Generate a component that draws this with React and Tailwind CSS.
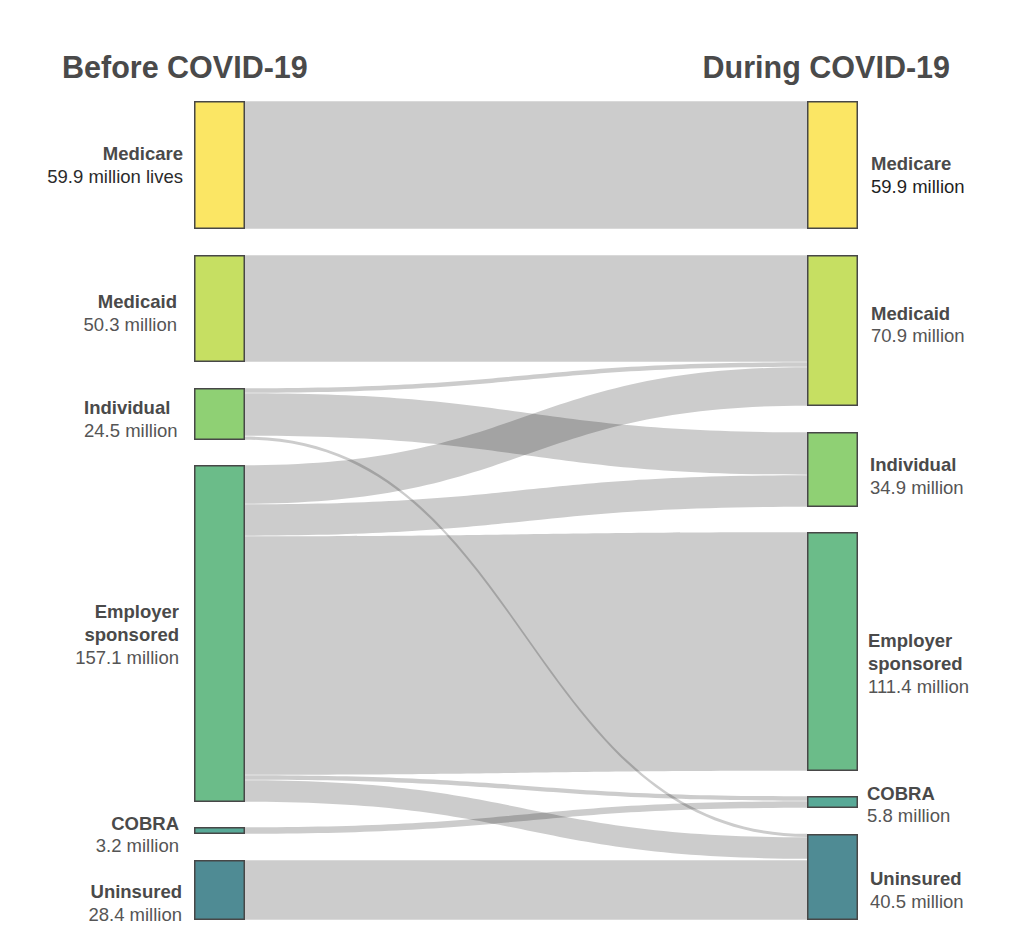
const L = 245
const R = 807

const links = [
  // [left top, left bottom, right top, right bottom]
  [101, 229, 101, 229],
  [255, 362, 255, 362],
  [388, 393, 362, 367],
  [465, 504, 367, 406],
  [393, 436, 432, 475],
  [504, 536, 475, 507],
  [536, 775, 532, 771],
  [775, 780, 796, 801],
  [827, 834, 801, 808],
  [436.3, 440, 833.5, 837.2],
  [780, 802, 837, 859],
  [860, 920, 860, 920],
]

const nodes = [
  { x: 194, y0: 101, y1: 229, fill: '#fbe664' },
  { x: 194, y0: 255, y1: 362, fill: '#c6df62' },
  { x: 194, y0: 388, y1: 440, fill: '#8fd074' },
  { x: 194, y0: 465, y1: 802, fill: '#6bbc89' },
  { x: 194, y0: 827, y1: 834, fill: '#58a997' },
  { x: 194, y0: 860, y1: 920, fill: '#4f8b94' },
  { x: 807, y0: 101, y1: 229, fill: '#fbe664' },
  { x: 807, y0: 255, y1: 406, fill: '#c6df62' },
  { x: 807, y0: 432, y1: 507, fill: '#8fd074' },
  { x: 807, y0: 532, y1: 771, fill: '#6bbc89' },
  { x: 807, y0: 796, y1: 808, fill: '#58a997' },
  { x: 807, y0: 834, y1: 920, fill: '#4f8b94' },
]

// label lines: [text, visual center y, bold?, colour]
const leftLabels = [
  { x: 183, anchor: 'end', lines: [['Medicare', 153, true], ['59.9 million lives', 176, false, '#2b2b2b']] },
  { x: 177, anchor: 'end', lines: [['Medicaid', 301, true], ['50.3 million', 324]] },
  { x: 84, anchor: 'start', lines: [['Individual', 407, true], ['24.5 million', 430]] },
  { x: 179, anchor: 'end', lines: [['Employer', 611, true], ['sponsored', 634, true], ['157.1 million', 657]] },
  { x: 179, anchor: 'end', lines: [['COBRA', 823, true], ['3.2 million', 845]] },
  { x: 182, anchor: 'end', lines: [['Uninsured', 891, true], ['28.4 million', 914]] },
]

const rightLabels = [
  { x: 871, lines: [['Medicare', 163, true], ['59.9 million', 186, false, '#1f1f1f']] },
  { x: 871, lines: [['Medicaid', 313, true], ['70.9 million', 335]] },
  { x: 870, lines: [['Individual', 464, true], ['34.9 million', 487]] },
  { x: 868, lines: [['Employer', 640, true], ['sponsored', 663, true], ['111.4 million', 686]] },
  { x: 867, lines: [['COBRA', 793, true], ['5.8 million', 815]] },
  { x: 870, lines: [['Uninsured', 878, true], ['40.5 million', 901]] },
]

function band([a0, b0, a1, b1]) {
  const m = (L + R) / 2
  const t0 = a0 + 0.3
  const t1 = a1 + 0.3
  const u0 = b0 - 0.3
  const u1 = b1 - 0.3
  return `M${L},${t0} C${m},${t0} ${m},${t1} ${R},${t1} L${R},${u1} C${m},${u1} ${m},${u0} ${L},${u0} Z`
}

function Label({ x, anchor = 'start', lines }) {
  return lines.map(([text, cy, bold, color]) => (
    <text
      key={text}
      x={x}
      y={cy + 6.5}
      textAnchor={anchor}
      fontSize="18.5"
      fontWeight={bold ? 700 : 400}
      fill={color ?? (bold ? '#4a4a4a' : '#555555')}
    >
      {text}
    </text>
  ))
}

export default function App() {
  return (
    <div className="h-[946px] w-[1024px] bg-white font-['Liberation_Sans',Arial,sans-serif]">
      <div className="flex h-[82px] justify-between pl-[62px] pr-[74px] pt-[52px] text-[30.5px] font-bold leading-[30px] text-[#4a4a4a]">
        <h1>Before COVID-19</h1>
        <h1>During COVID-19</h1>
      </div>

      <svg
        width="1024"
        height="864"
        viewBox="0 82 1024 864"
        className="block"
        fontFamily="'Liberation Sans', Arial, sans-serif"
      >
        {links.map((l, i) => (
          <path key={i} d={band(l)} fill="#000" fillOpacity="0.2" />
        ))}
        {nodes.map((n, i) => (
          <rect
            key={i}
            x={n.x + 0.75}
            y={n.y0 + 0.75}
            width={49.5}
            height={n.y1 - n.y0 - 1.5}
            fill={n.fill}
            stroke="#474747"
            strokeWidth="1.5"
          />
        ))}
        {leftLabels.map((lb, i) => (
          <Label key={'l' + i} {...lb} />
        ))}
        {rightLabels.map((lb, i) => (
          <Label key={'r' + i} {...lb} />
        ))}
      </svg>
    </div>
  )
}
